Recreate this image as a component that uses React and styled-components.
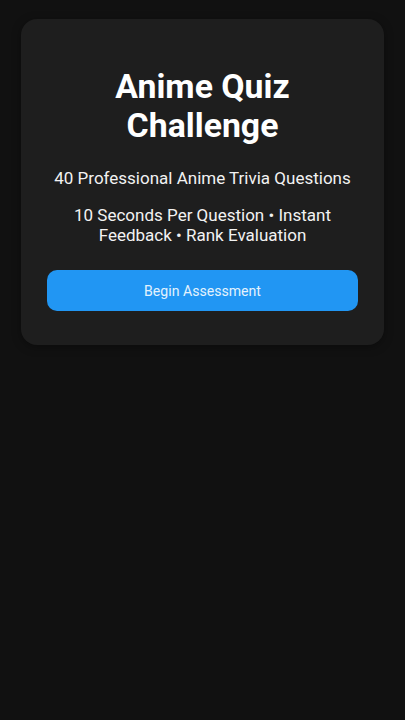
import React from "react";
import styled, { createGlobalStyle } from "styled-components";

const Global = createGlobalStyle`
  html, body { margin: 0; padding: 0; background: #111111; }
  body { font-family: Roboto, "Noto Sans", sans-serif; color: #ffffff; min-height: 720px; }
`;

const Page = styled.div`
  padding: 19px 21px;
  display: flex;
  flex-direction: column;
  align-items: stretch;
`;

const Card = styled.div`
  background: #1e1e1e;
  border-radius: 16px;
  padding: 48px 26px 34px;
  display: flex;
  flex-direction: column;
  align-items: stretch;
  text-align: center;
  box-shadow: 0 2px 10px rgba(0, 0, 0, 0.35);
`;

const Title = styled.h1`
  margin: 0;
  font-size: 33.8px;
  font-weight: 700;
  line-height: 39px;
  color: #ffffff;
`;

const Text = styled.p`
  margin: ${(p) => p.$mt}px 0 0;
  font-size: 17px;
  line-height: 20px;
  color: #f2f2f2;
`;

const Button = styled.button`
  margin-top: 25px;
  height: 41px;
  border: none;
  border-radius: 10px;
  background: #2196f3;
  color: #e3f2fd;
  font-family: Roboto, sans-serif;
  font-size: 14.1px;
  cursor: pointer;
`;

export default function App() {
  return (
    <>
      <Global />
      <Page>
        <Card>
          <Title>
            Anime Quiz
            <br />
            Challenge
          </Title>
          <Text $mt={23}>40 Professional Anime Trivia Questions</Text>
          <Text $mt={17}>
            10 Seconds Per Question • Instant
            <br />
            Feedback • Rank Evaluation
          </Text>
          <Button>Begin Assessment</Button>
        </Card>
      </Page>
    </>
  );
}
